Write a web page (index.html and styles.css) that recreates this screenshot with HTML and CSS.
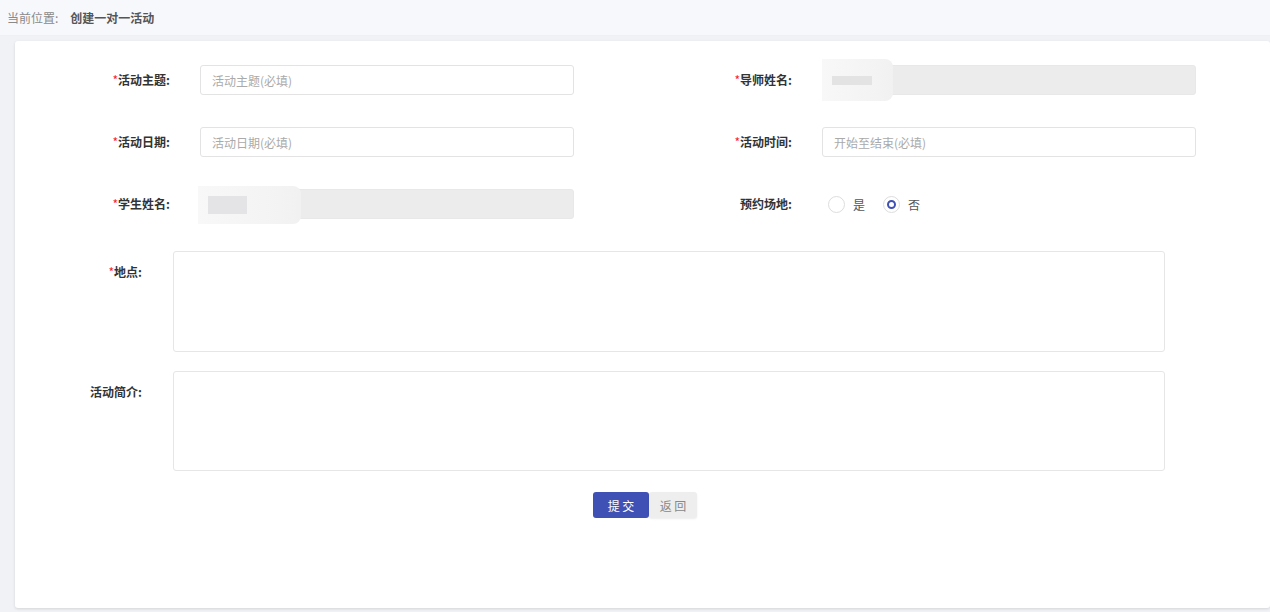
FILE: index.html
```html
<!DOCTYPE html>
<html lang="zh">
<head>
<meta charset="utf-8">
<link rel="stylesheet" href="styles.css">
</head>
<body>
<div class="crumb">
  <span class="crumb-label">当前位置:</span>
  <span class="crumb-current">创建一对一活动</span>
</div>
<div class="card">
  <div class="row">
    <div class="field">
      <label class="label"><i>*</i>活动主题:</label>
      <div class="input"><span class="ph">活动主题(必填)</span></div>
    </div>
    <div class="field">
      <label class="label"><i>*</i>导师姓名:</label>
      <div class="input disabled teacher">
        <div class="blur"><span class="blob"></span></div>
      </div>
    </div>
  </div>
  <div class="row">
    <div class="field">
      <label class="label"><i>*</i>活动日期:</label>
      <div class="input"><span class="ph">活动日期(必填)</span></div>
    </div>
    <div class="field">
      <label class="label"><i>*</i>活动时间:</label>
      <div class="input"><span class="ph">开始至结束(必填)</span></div>
    </div>
  </div>
  <div class="row">
    <div class="field">
      <label class="label"><i>*</i>学生姓名:</label>
      <div class="input disabled student">
        <div class="blur"><span class="blob"></span></div>
      </div>
    </div>
    <div class="field">
      <label class="label">预约场地:</label>
      <div class="radios">
        <span class="radio"><span class="circle"></span>是</span>
        <span class="radio"><span class="circle checked"></span>否</span>
      </div>
    </div>
  </div>
  <div class="area-row">
    <label class="label wide"><i>*</i>地点:</label>
    <div class="textarea"></div>
  </div>
  <div class="area-row second">
    <label class="label wide">活动简介:</label>
    <div class="textarea"></div>
  </div>
  <div class="buttons">
    <button class="btn primary">提 交</button>
    <button class="btn plain">返 回</button>
  </div>
</div>
</body>
</html>
```
FILE: styles.css
```css
* { box-sizing: border-box; }
html, body { margin: 0; padding: 0; }
body {
  background: #f0f2f5;
  font-family: "Noto Sans CJK SC", "Noto Sans", sans-serif;
  font-size: 12px;
  color: #333;
  width: 1270px;
  height: 612px;
  overflow: hidden;
}
.crumb {
  height: 36px;
  background: #f7f8fc;
  display: flex;
  align-items: center;
  padding-left: 7px;
  border-bottom: 1px solid #eef0f3;
}
.crumb-label { color: #8a8a8a; }
.crumb-current { color: #555; font-weight: bold; margin-left: 12px; }
.card {
  margin: 5px 0 0 15px;
  height: 567px;
  background: #fff;
  border-radius: 3px;
  box-shadow: 0 1px 3px rgba(0,0,0,0.12);
  padding: 24px 0 0 15px;
}
.row { display: flex; gap: 78px; margin-bottom: 32px; height: 30px; }
.field { display: flex; align-items: center; width: 544px; }
.label {
  width: 140px;
  text-align: right;
  font-weight: bold;
  color: #333;
  margin-right: 30px;
  flex: none;
  line-height: 30px;
}
.label i { font-style: normal; color: #f22; font-weight: normal; }
.input {
  width: 374px;
  height: 30px;
  border: 1px solid #e3e3e3;
  border-radius: 3px;
  display: flex;
  align-items: center;
  padding-left: 11px;
}
.ph { color: #aaa; }
.input.disabled {
  background: #ececec;
  border-color: #e8e8e8;
  padding: 0;
  position: relative;
  overflow: visible;
}
.blur {
  position: absolute;
  left: -1px;
  top: -7px;
  height: 42px;
  width: 71px;
  background: linear-gradient(90deg, #f8f8f8, #f3f3f3 80%, #f1f1f1);
  border-radius: 0 8px 8px 0;
  display: flex;
  align-items: center;
  padding-left: 10px;
}
.blob { display: block; width: 40px; height: 9px; background: #e3e3e3; }
.student .blur { width: 103px; left: -3px; top: -4px; height: 38px; }
.student .blob { width: 39px; height: 18px; background: #e4e4e6; }
.radios { display: flex; align-items: center; padding-left: 6px; gap: 18px; color: #555; }
.radio { display: flex; align-items: center; gap: 8px; }
.circle {
  width: 17px; height: 17px;
  border: 1px solid #ddd;
  border-radius: 50%;
  display: flex; align-items: center; justify-content: center;
}
.circle.checked::after {
  content: "";
  width: 5px; height: 5px;
  border-radius: 50%;
  border: 2px solid #3f51b5;
  background: #fff;
}
.area-row { display: flex; margin-bottom: 20px; }
.label.wide { width: 112px; margin-right: 31px; padding-top: 6px; line-height: 30px; height: 36px; }
.textarea {
  width: 992px;
  height: 101px;
  border: 1px solid #e6e6e6;
  border-radius: 3px;
}
.area-row.second { margin-top: -1px; }
.area-row.second .textarea { height: 100px; }
.buttons { display: flex; justify-content: flex-start; padding-left: 563px; margin-top: 21px; }
.btn {
  font-family: inherit;
  font-size: 12px;
  height: 26px;
  border: none;
  border-radius: 3px;
  cursor: pointer;
}
.btn.primary { background: #3f51b5; color: #fff; width: 56px; }
.btn.plain { background: #eeeeee; color: #888; width: 48px; box-shadow: 0 1px 2px rgba(0,0,0,0.08); }
```
